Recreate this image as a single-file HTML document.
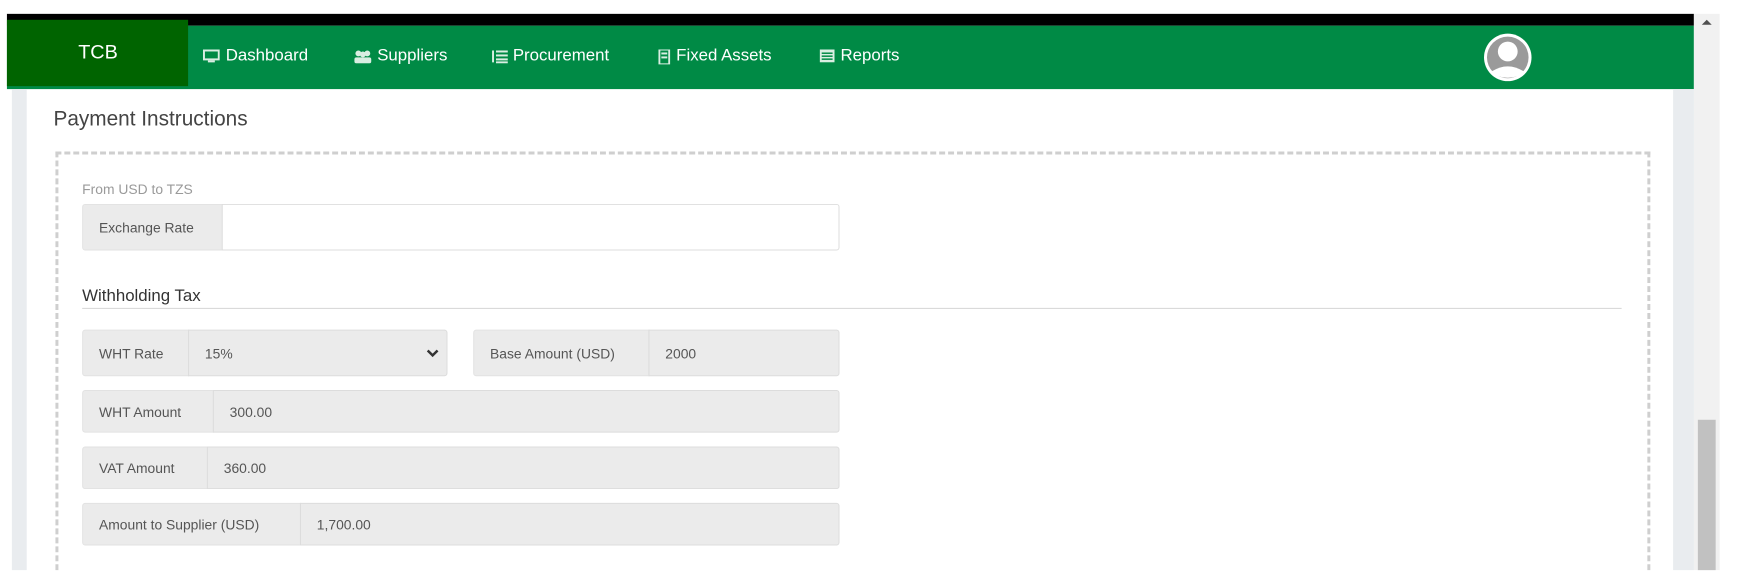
<!DOCTYPE html>
<html style="width:1739px;height:571px;overflow:hidden"><head><style>
*{box-sizing:border-box;margin:0;padding:0}
body{width:1739px;height:571px;overflow:hidden;background:#fff;font-family:"Liberation Sans",sans-serif;position:relative}
#w{position:absolute;left:0;top:0;width:1739px;height:576px;overflow:hidden;transform:scale(0.99);transform-origin:0 0}
.a{position:absolute}
.nav{color:#fff;font-size:17px;top:45px;line-height:22px}
.ic{position:absolute;top:50px}
.lbl{position:absolute;background:#ebebeb;border:1px solid #e2e2e2;color:#555;font-size:14px;display:flex;align-items:center;padding-left:16px;border-radius:3px 0 0 3px}
.inp{position:absolute;background:#ebebeb;border:1px solid #dcdcdc;color:#555;font-size:14px;display:flex;align-items:center;padding-left:16px;border-radius:0 3px 3px 0}
</style></head><body><div id="w">
<div class="a" style="left:7px;top:14px;width:1704px;height:12px;background:#000"></div>
<div class="a" style="left:7px;top:26px;width:1704px;height:64px;background:#008a45"></div>
<div class="a" style="left:7px;top:20px;width:183px;height:67px;background:#006400"></div>
<div class="a" style="left:79px;top:42px;color:#fff;font-size:20px">TCB</div>
<svg class="ic" style="left:205px" width="17" height="14"><rect x="1" y="1" width="15" height="9" fill="none" stroke="#d9eee2" stroke-width="2"/><rect x="5" y="11" width="7" height="2" fill="#d9eee2"/></svg>
<div class="a nav" style="left:228px">Dashboard</div>
<svg class="ic" style="left:357px" width="19" height="14"><circle cx="5" cy="4" r="3" fill="#d9eee2"/><circle cx="14" cy="4" r="3" fill="#d9eee2"/><circle cx="9.5" cy="5" r="3" fill="#d9eee2"/><rect x="1" y="8" width="17" height="6" rx="2" fill="#d9eee2"/></svg>
<div class="a nav" style="left:381px">Suppliers</div>
<svg class="ic" style="left:497px" width="16" height="14"><rect x="0" y="1" width="2" height="12" fill="#d9eee2"/><rect x="4" y="1" width="12" height="2" fill="#d9eee2"/><rect x="4" y="5" width="12" height="2" fill="#d9eee2"/><rect x="4" y="9" width="12" height="2" fill="#d9eee2"/><rect x="4" y="12" width="12" height="2" fill="#d9eee2"/></svg>
<div class="a nav" style="left:518px">Procurement</div>
<svg class="ic" style="left:665px" width="12" height="15"><rect x="1" y="0" width="10" height="15" fill="none" stroke="#d9eee2" stroke-width="2"/><rect x="3" y="3" width="6" height="2" fill="#d9eee2"/><rect x="3" y="7" width="6" height="2" fill="#d9eee2"/></svg>
<div class="a nav" style="left:683px">Fixed Assets</div>
<svg class="ic" style="left:828px" width="15" height="13"><rect x="0" y="0" width="15" height="13" fill="#d9eee2"/><rect x="2" y="3" width="11" height="1.5" fill="#008a45"/><rect x="2" y="6" width="11" height="1.5" fill="#008a45"/><rect x="2" y="9" width="11" height="1.5" fill="#008a45"/></svg>
<div class="a nav" style="left:849px">Reports</div>
<svg class="a" style="left:1497px;top:32px" width="52" height="52"><circle cx="26" cy="26" r="24" fill="#fff"/><circle cx="26" cy="26" r="21" fill="#9a9a9a"/><circle cx="26" cy="20" r="10" fill="#fff"/><path d="M10 40 Q26 30 42 40 L40 43 Q26 50 12 43Z" fill="#fff"/></svg>
<div class="a" style="left:1711px;top:14px;width:26px;height:562px;background:#f1f1f1"></div>
<div class="a" style="left:1715px;top:424px;width:18px;height:152px;background:#c1c1c1"></div>
<div class="a" style="left:1719px;top:20px;width:0;height:0;border-left:5px solid transparent;border-right:5px solid transparent;border-bottom:5px solid #505050"></div>
<div class="a" style="left:12px;top:90px;width:15px;height:486px;background:#e9ecef"></div>
<div class="a" style="left:1690px;top:90px;width:21px;height:486px;background:#e9ecef"></div>
<div class="a" style="left:54px;top:109px;font-size:21px;color:#444">Payment Instructions</div>
<div class="a" style="left:56px;top:153px;width:1611px;height:423px;border:3px dashed #cfcfcf;border-bottom:none"></div>
<div class="a" style="left:83px;top:183px;font-size:14px;color:#9a9a9a">From USD to TZS</div>
<div class="lbl" style="left:83px;top:206px;width:142px;height:47px">Exchange Rate</div>
<div class="inp" style="left:224px;top:206px;width:624px;height:47px;background:#fff;border-color:#ddd"></div>
<div class="a" style="left:83px;top:289px;font-size:17px;color:#333">Withholding Tax</div>
<div class="a" style="left:83px;top:311px;width:1555px;height:1px;background:#d5d5d5"></div>
<div class="lbl" style="left:83px;top:333px;width:108px;height:47px">WHT Rate</div>
<div class="inp" style="left:190px;top:333px;width:262px;height:47px">15%<svg style="position:absolute;right:8px;top:19px" width="12" height="9"><path d="M1 1 L6 6 L11 1" fill="none" stroke="#333" stroke-width="2.5"/></svg></div>
<div class="lbl" style="left:478px;top:333px;width:178px;height:47px">Base Amount (USD)</div>
<div class="inp" style="left:655px;top:333px;width:193px;height:47px">2000</div>
<div class="lbl" style="left:83px;top:394px;width:133px;height:43px">WHT Amount</div>
<div class="inp" style="left:215px;top:394px;width:633px;height:43px">300.00</div>
<div class="lbl" style="left:83px;top:451px;width:127px;height:43px">VAT Amount</div>
<div class="inp" style="left:209px;top:451px;width:639px;height:43px">360.00</div>
<div class="lbl" style="left:83px;top:508px;width:221px;height:43px">Amount to Supplier (USD)</div>
<div class="inp" style="left:303px;top:508px;width:545px;height:43px">1,700.00</div>
</div></body></html>
